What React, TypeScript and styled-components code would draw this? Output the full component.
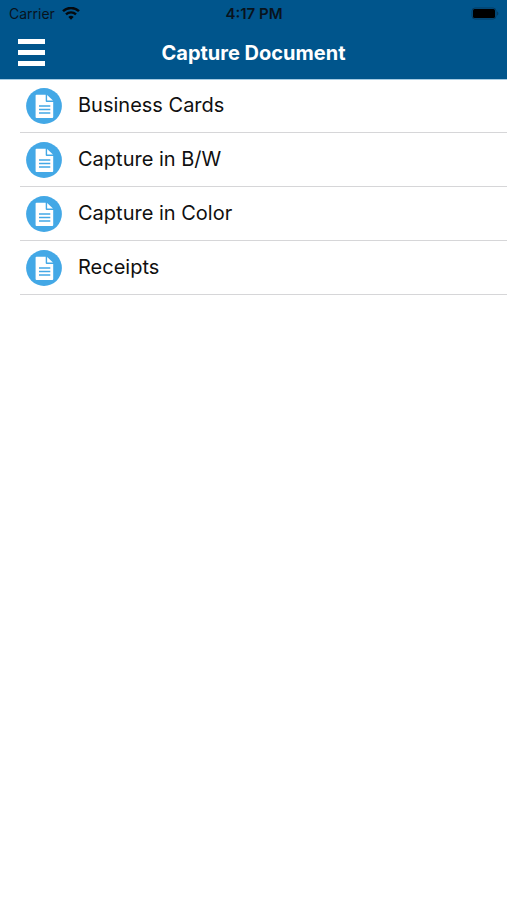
import React from "react";
import styled, { createGlobalStyle } from "styled-components";

const GlobalStyle = createGlobalStyle`
  *, *::before, *::after { box-sizing: border-box; }
  body {
    margin: 0;
    background: #fff;
    color: #101010;
    font-family: Inter, "Liberation Sans", sans-serif;
  }
`;

const Header = styled.header`
  padding-bottom: 1px;
  background: #00558c;
  box-shadow: 0 1px 0 #a5cbe3;
`;

const StatusBar = styled.div`
  display: grid;
  grid-template-columns: 1fr auto 1fr;
  align-items: center;
  height: 27px;
  padding: 0 8px 0 9px;
  color: #08131d;
  font-size: 14px;
  line-height: 20px;
`;

const Carrier = styled.div`
  display: flex;
  align-items: center;
  gap: 7px;
`;

const Time = styled.time`
  font-size: 15px;
  font-weight: 600;
`;

const Battery = styled.svg`
  justify-self: end;
`;

const NavBar = styled.div`
  display: grid;
  grid-template-columns: 44px 1fr 44px;
  align-items: center;
  height: 51px;
  padding: 0 9px;
`;

const MenuButton = styled.button`
  display: grid;
  place-items: center;
  width: 44px;
  height: 45px;
  padding: 0;
  border: 0;
  background: none;
  cursor: pointer;
`;

const Title = styled.h1`
  margin: 0;
  color: #fff;
  font-size: 20px;
  font-weight: 700;
  line-height: 24px;
  text-align: center;
`;

const List = styled.ul`
  margin: 0;
  padding: 0 0 0 20px;
  list-style: none;
`;

const Item = styled.li`
  border-bottom: 1px solid #d6d6d8;
`;

const ItemButton = styled.button`
  display: flex;
  align-items: center;
  gap: 16px;
  width: 100%;
  height: 53px;
  padding: 0 6px;
  border: 0;
  background: none;
  color: inherit;
  font: inherit;
  font-size: 20px;
  line-height: 25px;
  text-align: left;
  cursor: pointer;
`;

const WifiIcon = () => (
  <svg width="18" height="14" viewBox="0 0 18 14" fill="none" stroke="#05090d" aria-hidden="true">
    <path d="M1 4.200a11.600 11.600 0 0 1 16 0" strokeWidth="2.500" />
    <path d="M4 7.400a7.200 7.200 0 0 1 10 0" strokeWidth="2.400" />
    <path d="M6.300 10a4 4 0 0 1 5.400 0L9 12.700z" fill="#05090d" stroke="none" />
  </svg>
);

const BatteryIcon = () => (
  <Battery width="28" height="14" viewBox="0 0 28 14" role="img" aria-label="Battery full">
    <rect x="1" y="1" width="24" height="11" rx="3" fill="none" stroke="#053c62" />
    <rect x="2" y="2" width="22" height="9" rx="1.500" fill="#000" />
    <path d="M26 4.500c1.800.4 1.800 3.600 0 4z" fill="#053c62" />
  </Battery>
);

const MenuIcon = () => (
  <svg width="27" height="27" viewBox="0 0 27 27" fill="#fff" aria-hidden="true">
    <path d="M0 0h27v5H0zM0 11h27v5H0zM0 22h27v5H0z" />
  </svg>
);

const DocumentIcon = () => (
  <svg width="36" height="36" viewBox="0 0 36 36" aria-hidden="true">
    <circle cx="18" cy="18" r="17.900" fill="#43a8e6" />
    <path d="M10.500 6.700h9.200v6.200a1 1 0 0 0 1 1h6.500v15.100a.9.900 0 0 1-.9.900H10.500a.9.900 0 0 1-.9-.9V7.600a.9.900 0 0 1 .9-.9z" fill="#fff" />
    <path d="M21.100 6.900l5.900 5.600h-5.900z" fill="#fff" />
    <path d="M13 18h11.300M13 21.500h11.300M13 25h11.300" stroke="#43a8e6" strokeWidth="1.300" />
  </svg>
);

const documentTypes = ["Business Cards", "Capture in B/W", "Capture in Color", "Receipts"];

export default function App() {
  return (
    <>
      <GlobalStyle />
      <Header>
        <StatusBar>
          <Carrier>
            <span>Carrier</span>
            <WifiIcon />
          </Carrier>
          <Time>4:17 PM</Time>
          <BatteryIcon />
        </StatusBar>
        <NavBar>
          <MenuButton type="button" aria-label="Menu">
            <MenuIcon />
          </MenuButton>
          <Title>Capture Document</Title>
        </NavBar>
      </Header>
      <main>
        <List>
          {documentTypes.map((name) => (
            <Item key={name}>
              <ItemButton type="button">
                <DocumentIcon />
                <span>{name}</span>
              </ItemButton>
            </Item>
          ))}
        </List>
      </main>
    </>
  );
}
